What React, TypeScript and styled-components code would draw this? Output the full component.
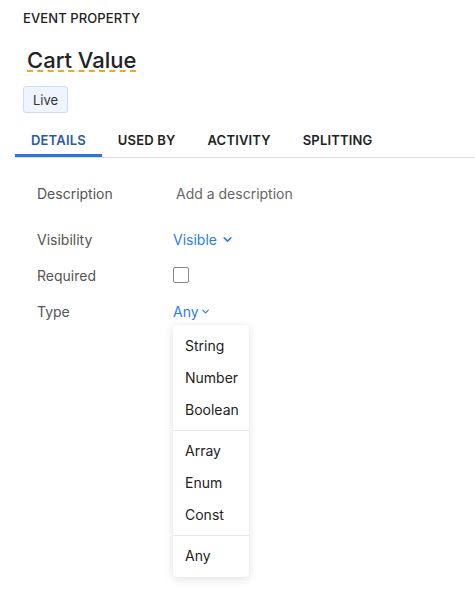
import React from "react";
import styled, { createGlobalStyle } from "styled-components";

const Global = createGlobalStyle`
  html, body { margin: 0; padding: 0; background: #fff; }
  body { font-family: Inter, "Noto Sans", sans-serif; color: #222; }
`;

const Page = styled.div`
  width: 475px;
  height: 600px;
  display: flex;
  flex-direction: column;
`;

const Header = styled.div`
  padding: 11px 0 0 23px;
  display: flex;
  flex-direction: column;
  align-items: flex-start;
`;

const Eyebrow = styled.div`
  font-size: 13px;
  font-weight: 500;
  letter-spacing: 0.1px;
  color: #222;
  line-height: 15px;
`;

const Title = styled.h1`
  margin: 24px 0 0 4px;
  font-size: 22px;
  font-weight: 500;
  line-height: 20px;
  color: #222;
  border-bottom: 2px dashed #f0a91e;
`;

const Badge = styled.span`
  margin-top: 14px;
  display: inline-flex;
  align-items: center;
  box-sizing: border-box;
  height: 27px;
  padding: 0 9px;
  font-size: 13px;
  color: #333;
  background: #eef5fe;
  border: 1px solid #c9dcf4;
  border-radius: 3px;
`;

const Tabs = styled.div`
  margin: 19px 0 0 15px;
  display: flex;
  border-bottom: 1px solid #dcdcdc;
`;

const Tab = styled.div<{ $active?: boolean }>`
  padding: 0 16px;
  height: 25px;
  line-height: 16px;
  font-size: 13px;
  font-weight: 600;
  letter-spacing: 0.18px;
  color: ${(p) => (p.$active ? "#2d5aa5" : "#222")};
  box-shadow: ${(p) => (p.$active ? "inset 0 -3px 0 #2f74d8" : "none")};
`;

const Rows = styled.div`
  padding: 17px 0 0 37px;
  display: flex;
  flex-direction: column;
`;

const Row = styled.div<{ $gap?: number }>`
  display: grid;
  grid-template-columns: 136px 1fr;
  align-items: center;
  height: 36px;
  margin-bottom: ${(p) => p.$gap ?? 0}px;
  font-size: 14px;
`;

const Label = styled.div`
  color: #555;
`;

const Placeholder = styled.div`
  color: #666;
  margin-left: 3px;
`;

const Link = styled.div<{ $gap: number }>`
  color: #2b7de9;
  display: inline-flex;
  align-items: center;
  gap: ${(p) => p.$gap}px;
`;

const Check = styled.div`
  width: 14px;
  height: 14px;
  border: 1px solid #888;
  border-radius: 2px;
`;

const Cell = styled.div`
  position: relative;
`;

const Menu = styled.div`
  position: absolute;
  top: 22px;
  left: 0;
  width: 76px;
  background: #fff;
  border-radius: 3px;
  box-shadow: 0 2px 10px rgba(0, 0, 0, 0.12), 0 0 1px rgba(0, 0, 0, 0.08);
  padding: 1px 0;
  z-index: 2;
`;

const Group = styled.div`
  display: flex;
  flex-direction: column;
  padding: 4px 0;
  & + & { border-top: 1px solid #e8e8e8; }
`;

const Item = styled.div`
  height: 32px;
  display: flex;
  align-items: center;
  padding-left: 12px;
  font-size: 14px;
  color: #222;
`;

const Chevron = ({ size }: { size: number }) => (
  <svg width={size} height={size} viewBox="0 0 10 10" fill="none">
    <path d="M2 3.5 L5 6.5 L8 3.5" stroke="#2b7de9" strokeWidth="1.4" strokeLinecap="round" strokeLinejoin="round" />
  </svg>
);

const groups = [["String", "Number", "Boolean"], ["Array", "Enum", "Const"], ["Any"]];

export default function App() {
  return (
    <Page>
      <Global />
      <Header>
        <Eyebrow>EVENT PROPERTY</Eyebrow>
        <Title>Cart Value</Title>
        <Badge>Live</Badge>
      </Header>
      <Tabs>
        <Tab $active>DETAILS</Tab>
        <Tab>USED BY</Tab>
        <Tab>ACTIVITY</Tab>
        <Tab>SPLITTING</Tab>
      </Tabs>
      <Rows>
        <Row $gap={10}>
          <Label>Description</Label>
          <Placeholder>Add a description</Placeholder>
        </Row>
        <Row>
          <Label>Visibility</Label>
          <Link $gap={5}>Visible <Chevron size={11} /></Link>
        </Row>
        <Row>
          <Label>Required</Label>
          <Check />
        </Row>
        <Row>
          <Label>Type</Label>
          <Cell>
            <Link $gap={2}>Any <Chevron size={9} /></Link>
            <Menu>
              {groups.map((g, i) => (
                <Group key={i}>
                  {g.map((t) => (
                    <Item key={t}>{t}</Item>
                  ))}
                </Group>
              ))}
            </Menu>
          </Cell>
        </Row>
      </Rows>
    </Page>
  );
}
